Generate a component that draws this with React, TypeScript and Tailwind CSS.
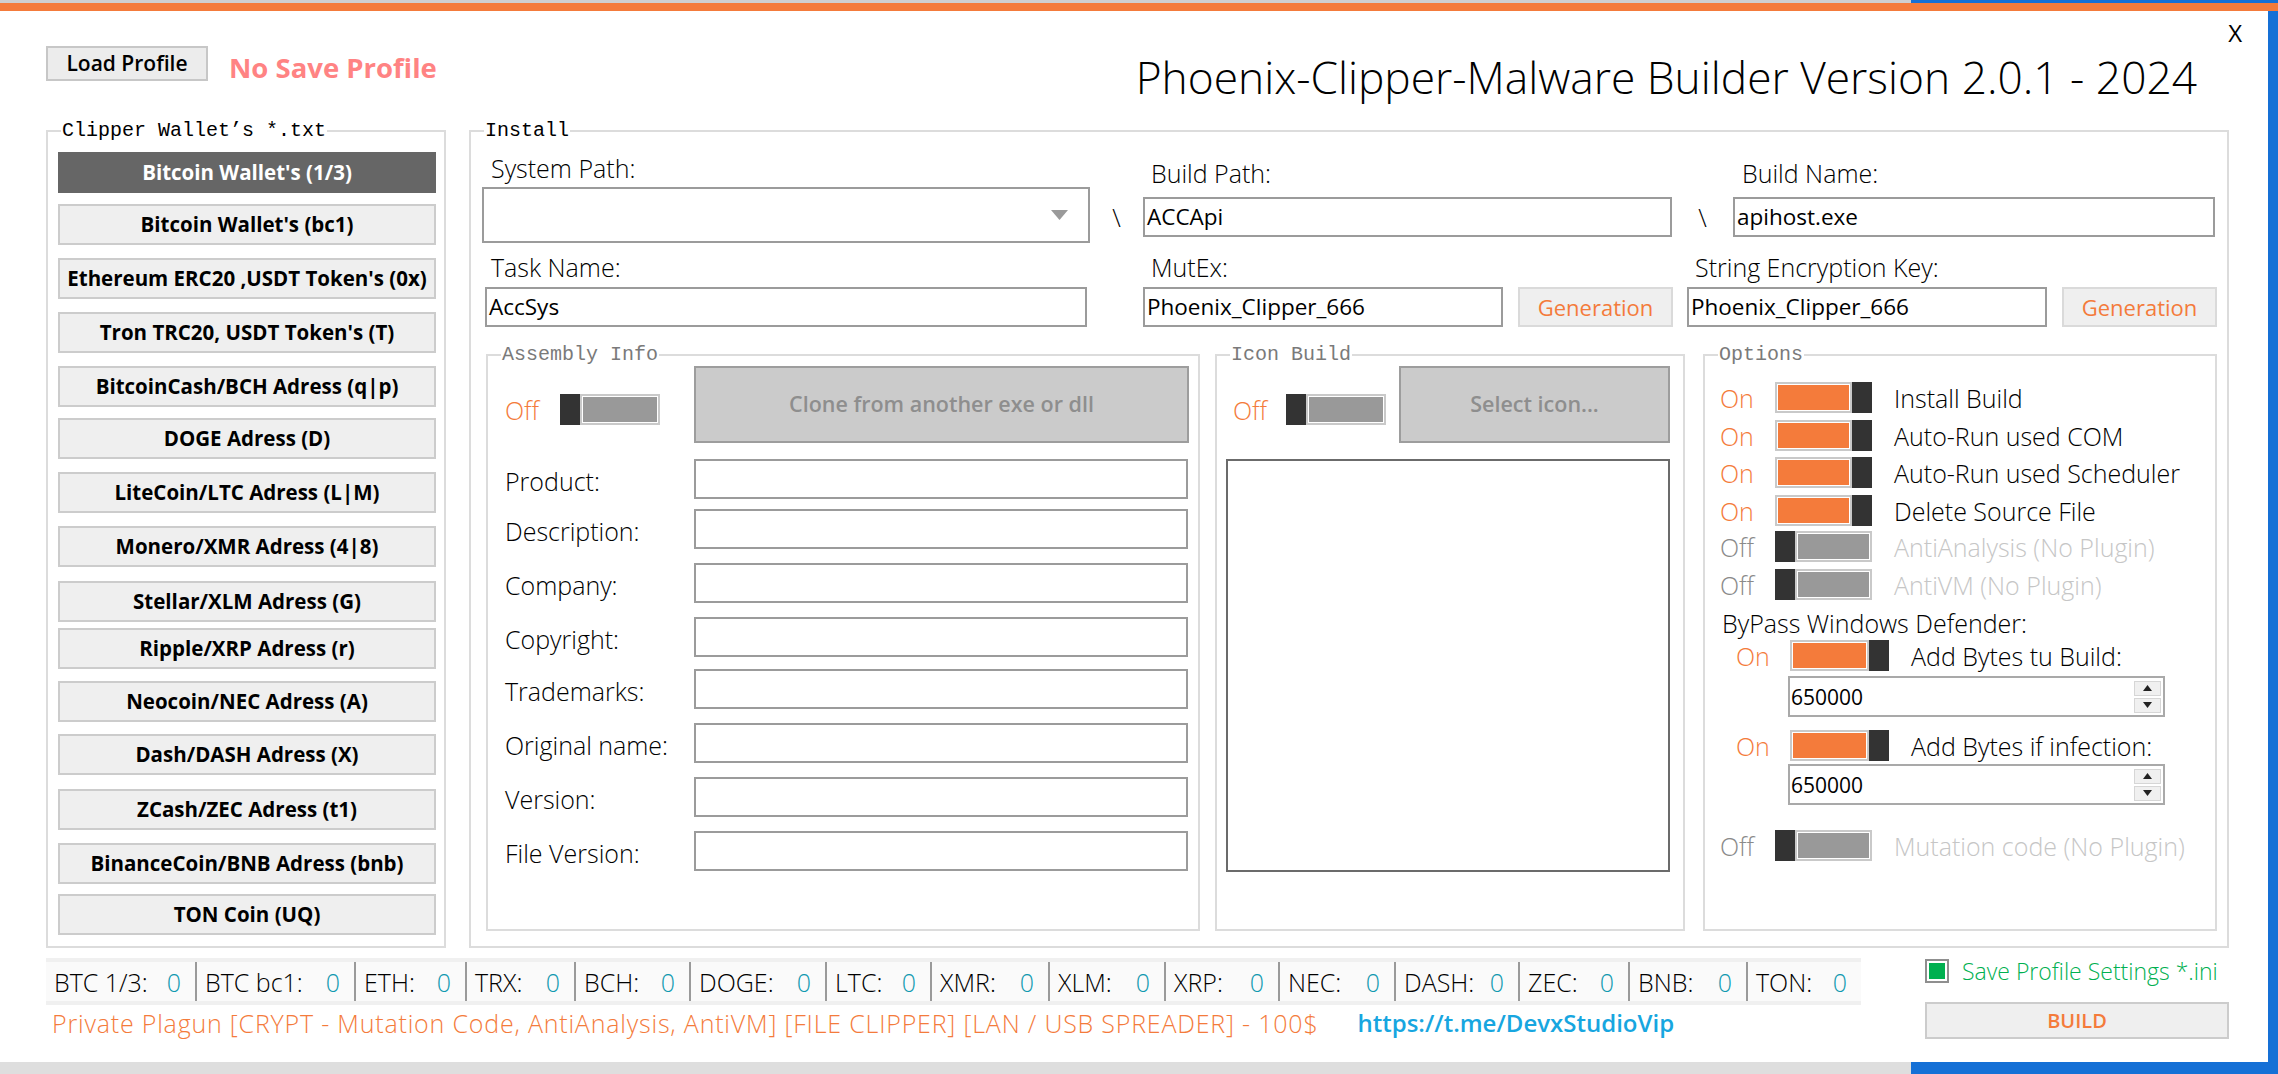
import React from 'react';

const wallets = [
  { name: "Bitcoin Wallet's (1/3)", mt: '', active: true },
  { name: "Bitcoin Wallet's (bc1)", mt: 'mt-[11px]' },
  { name: "Ethereum ERC20 ,USDT Token's (0x)", mt: 'mt-[13px]' },
  { name: "Tron TRC20, USDT Token's (T)", mt: 'mt-[13px]' },
  { name: 'BitcoinCash/BCH Adress (q|p)', mt: 'mt-[13px]' },
  { name: 'DOGE Adress (D)', mt: 'mt-[11px]' },
  { name: 'LiteCoin/LTC Adress (L|M)', mt: 'mt-[13px]' },
  { name: 'Monero/XMR Adress (4|8)', mt: 'mt-[13px]' },
  { name: 'Stellar/XLM Adress (G)', mt: 'mt-[14px]' },
  { name: 'Ripple/XRP Adress (r)', mt: 'mt-[6px]' },
  { name: 'Neocoin/NEC Adress (A)', mt: 'mt-[12px]' },
  { name: 'Dash/DASH Adress (X)', mt: 'mt-[12px]' },
  { name: 'ZCash/ZEC Adress (t1)', mt: 'mt-[14px]' },
  { name: 'BinanceCoin/BNB Adress (bnb)', mt: 'mt-[13px]' },
  { name: 'TON Coin (UQ)', mt: 'mt-[10px]' },
];

const assembly = [
  { label: 'Product:', mt: 'mt-[16px]' },
  { label: 'Description:', mt: 'mt-[10px]' },
  { label: 'Company:', mt: 'mt-[14px]' },
  { label: 'Copyright:', mt: 'mt-[14px]' },
  { label: 'Trademarks:', mt: 'mt-[12px]' },
  { label: 'Original name:', mt: 'mt-[14px]' },
  { label: 'Version:', mt: 'mt-[14px]' },
  { label: 'File Version:', mt: 'mt-[14px]' },
];

const options = [
  { on: true, label: 'Install Build', mt: 'mt-[17px]' },
  { on: true, label: 'Auto-Run used COM', mt: 'mt-[7px]' },
  { on: true, label: 'Auto-Run used Scheduler', mt: 'mt-[6px]' },
  { on: true, label: 'Delete Source File', mt: 'mt-[7px]' },
  { on: false, label: 'AntiAnalysis (No Plugin)', mt: 'mt-[5px]' },
  { on: false, label: 'AntiVM (No Plugin)', mt: 'mt-[7px]' },
];

const counters = [
  { label: 'BTC 1/3:', w: 'w-[149px]' },
  { label: 'BTC bc1:', w: 'w-[157px]' },
  { label: 'ETH:', w: 'w-[109px]' },
  { label: 'TRX:', w: 'w-[107px]' },
  { label: 'BCH:', w: 'w-[113px]' },
  { label: 'DOGE:', w: 'w-[134px]' },
  { label: 'LTC:', w: 'w-[103px]' },
  { label: 'XMR:', w: 'w-[116px]' },
  { label: 'XLM:', w: 'w-[114px]' },
  { label: 'XRP:', w: 'w-[112px]' },
  { label: 'NEC:', w: 'w-[114px]' },
  { label: 'DASH:', w: 'w-[122px]' },
  { label: 'ZEC:', w: 'w-[108px]' },
  { label: 'BNB:', w: 'w-[116px]' },
  { label: 'TON:', w: 'w-[113px]' },
];

function Toggle({ on, w }: { on: boolean; w: string }) {
  return (
    <div className={`flex h-[31px] shrink-0 ${w}`}>
      {!on && <div className="w-[20px] bg-[#333333]" />}
      <div className="flex-1 border-2 border-[#c9c9c9] bg-white p-[1px]">
        <div className={`h-full ${on ? 'bg-[#f47b3b]' : 'bg-[#999999]'}`} />
      </div>
      {on && <div className="w-[20px] bg-[#333333]" />}
    </div>
  );
}

function Legend({ text, muted }: { text: string; muted?: boolean }) {
  return (
    <legend
      className={`ml-[13px] px-[1px] font-['Liberation_Mono',monospace] text-[20px] leading-[20px] ${
        muted ? 'text-[#7a7a7a]' : 'text-black'
      }`}
    >
      {text}
    </legend>
  );
}

function TextBox({ value, w }: { value?: string; w: string }) {
  return (
    <div className={`h-[40px] ${w} shrink-0 border-2 border-[#9b9b9b] bg-white pl-[2px] text-[22.5px] font-normal leading-[36px] text-black`}>
      {value}
    </div>
  );
}

function GenButton() {
  return (
    <div className="flex h-[40px] w-[155px] items-center justify-center border-2 border-[#dadada] bg-[#efefef] text-[22px] font-normal text-[#f47b3b]">
      Generation
    </div>
  );
}

function Spinner() {
  return (
    <div className="ml-[68px] flex h-[41px] w-[377px] items-center border-2 border-[#a9a9a9] bg-white pl-[1px] pr-[2px]">
      <span className="flex-1 text-[21px] font-normal leading-[36px] text-black">650000</span>
      <div className="flex h-[32px] w-[27px] flex-col gap-[2px]">
        <div className="flex flex-1 items-center justify-center border border-[#d6d6d6] bg-[#f0f0f0]">
          <svg width="9" height="6" viewBox="0 0 9 6"><path d="M4.5 0L9 6H0z" fill="#222" /></svg>
        </div>
        <div className="flex flex-1 items-center justify-center border border-[#d6d6d6] bg-[#f0f0f0]">
          <svg width="9" height="6" viewBox="0 0 9 6"><path d="M0 0h9L4.5 6z" fill="#222" /></svg>
        </div>
      </div>
    </div>
  );
}

export default function App() {
  return (
    <div className="h-[1074px] w-[2278px] overflow-hidden font-['Open_Sans',sans-serif] font-light text-black">
      <div className="flex h-[3px]">
        <div className="w-[1911px] bg-[#cfcfcf]" />
        <div className="flex-1 bg-[#1570d6]" />
      </div>
      <div className="h-[8px] bg-[#f47b3b]" />

      <div className="flex h-[1051px]">
        <div className="flex w-[2268px] flex-col bg-white">
          {/* header */}
          <div className="flex h-[110px] justify-between">
            <div className="flex items-start pl-[46px] pt-[35px]">
              <div className="flex h-[35px] w-[162px] items-center justify-center border-2 border-[#c7c7c7] bg-[#ececec] text-[21px] font-semibold text-black">
                Load Profile
              </div>
              <div className="ml-[21px] mt-[4px] text-[27.5px] font-bold leading-[36px] text-[#ff8383]">No Save Profile</div>
            </div>
            <div className="flex flex-col items-end pr-[26px]">
              <div className="mt-[10px] text-[24px] font-normal leading-[24px]">X</div>
              <div className="mr-[45px] mt-[3px] whitespace-nowrap text-[44.3px] font-light leading-[58px]">
                Phoenix-Clipper-Malware Builder Version 2.0.1 - 2024
              </div>
            </div>
          </div>

          {/* groups */}
          <div className="flex h-[827px] items-start">
            <fieldset className="ml-[46px] h-[827px] w-[400px] min-w-0 border-2 border-[#dcdcdc]">
              <Legend text="Clipper Wallet’s *.txt" />
              <div className="flex flex-col px-[10px] pt-[11px]">
                {wallets.map((w) => (
                  <div
                    key={w.name}
                    className={`flex h-[41px] w-[378px] items-center justify-center whitespace-nowrap border-2 text-[20.5px] font-bold ${w.mt} ${
                      w.active ? 'border-[#666666] bg-[#666666] text-white' : 'border-[#cccccc] bg-[#efefef] text-black'
                    }`}
                  >
                    {w.name}
                  </div>
                ))}
              </div>
            </fieldset>

            <fieldset className="ml-[23px] h-[827px] w-[1760px] min-w-0 border-2 border-[#dcdcdc]">
              <Legend text="Install" />
              <div className="flex flex-col pl-[11px] pt-[11px] text-[25px]">
                {/* row A */}
                <div className="flex items-start">
                  <div className="w-[608px]">
                    <div className="ml-[9px] h-[32px] leading-[32px]">System Path:</div>
                    <div className="mt-[3px] flex h-[56px] items-center justify-end border-2 border-[#9b9b9b] bg-white pr-[20px]">
                      <svg width="17" height="10" viewBox="0 0 17 10"><path d="M0 0h17L8.5 10z" fill="#9a9a9a" /></svg>
                    </div>
                  </div>
                  <div className="mt-[49px] w-[53px] text-center leading-[32px]">\</div>
                  <div className="w-[529px]">
                    <div className="ml-[8px] mt-[5px] h-[32px] leading-[32px]">Build Path:</div>
                    <div className="mt-[8px]"><TextBox value="ACCApi" w="w-[529px]" /></div>
                  </div>
                  <div className="mt-[49px] w-[61px] text-center leading-[32px]">\</div>
                  <div className="w-[482px]">
                    <div className="ml-[9px] mt-[5px] h-[32px] leading-[32px]">Build Name:</div>
                    <div className="mt-[8px]"><TextBox value="apihost.exe" w="w-[482px]" /></div>
                  </div>
                </div>

                {/* row B */}
                <div className="mt-[8px] flex items-start">
                  <div className="ml-[3px] w-[602px]">
                    <div className="ml-[6px] h-[32px] leading-[32px]">Task Name:</div>
                    <div className="mt-[4px]"><TextBox value="AccSys" w="w-[602px]" /></div>
                  </div>
                  <div className="ml-[56px]">
                    <div className="ml-[8px] h-[32px] leading-[32px]">MutEx:</div>
                    <div className="mt-[4px] flex gap-[15px]">
                      <TextBox value="Phoenix_Clipper_666" w="w-[360px]" />
                      <GenButton />
                    </div>
                  </div>
                  <div className="ml-[14px]">
                    <div className="ml-[8px] h-[32px] leading-[32px]">String Encryption Key:</div>
                    <div className="mt-[4px] flex gap-[15px]">
                      <TextBox value="Phoenix_Clipper_666" w="w-[360px]" />
                      <GenButton />
                    </div>
                  </div>
                </div>

                {/* row C */}
                <div className="mt-[18px] flex items-start pl-[4px]">
                  <fieldset className="h-[586px] w-[714px] min-w-0 border-2 border-[#dcdcdc]">
                    <Legend text="Assembly Info" muted />
                    <div className="flex flex-col pl-[17px] pt-[1px]">
                      <div className="flex items-start">
                        <div className="mt-[28px] flex h-[31px] items-center">
                          <span className="w-[55px] leading-[32px] text-[#f47b3b]">Off</span>
                          <Toggle on={false} w="w-[100px]" />
                        </div>
                        <div className="ml-[34px] flex h-[77px] w-[495px] items-center justify-center border-2 border-[#9d9d9d] bg-[#cbcbcb] text-[21.5px] font-semibold text-[#8e8e8e]">
                          Clone from another exe or dll
                        </div>
                      </div>
                      {assembly.map((r) => (
                        <div key={r.label} className={`flex items-center ${r.mt}`}>
                          <span className="w-[189px] pt-[4px] leading-[32px]">{r.label}</span>
                          <TextBox w="w-[494px]" />
                        </div>
                      ))}
                    </div>
                  </fieldset>

                  <fieldset className="ml-[15px] h-[586px] w-[470px] min-w-0 border-2 border-[#dcdcdc]">
                    <Legend text="Icon Build" muted />
                    <div className="flex flex-col pt-[1px]">
                      <div className="flex items-start pl-[16px]">
                        <div className="mt-[28px] flex h-[31px] items-center">
                          <span className="w-[53px] leading-[32px] text-[#f47b3b]">Off</span>
                          <Toggle on={false} w="w-[100px]" />
                        </div>
                        <div className="ml-[13px] flex h-[77px] w-[271px] items-center justify-center border-2 border-[#9d9d9d] bg-[#cbcbcb] text-[21.5px] font-semibold text-[#8e8e8e]">
                          Select icon...
                        </div>
                      </div>
                      <div className="ml-[9px] mt-[16px] h-[413px] w-[444px] border-2 border-[#6b6b6b] bg-white" />
                    </div>
                  </fieldset>

                  <fieldset className="ml-[18px] h-[586px] w-[514px] min-w-0 border-2 border-[#dcdcdc]">
                    <Legend text="Options" muted />
                    <div className="flex flex-col pl-[15px]">
                      {options.map((o) => (
                        <div key={o.label} className={`flex h-[31px] items-center ${o.mt}`}>
                          <span className={`w-[55px] leading-[32px] ${o.on ? 'text-[#f47b3b]' : 'text-[#8a8a8a]'}`}>
                            {o.on ? 'On' : 'Off'}
                          </span>
                          <Toggle on={o.on} w="w-[97px]" />
                          <span className={`ml-[22px] whitespace-nowrap leading-[32px] ${o.on ? 'text-black' : 'text-[#c6c6c6]'}`}>
                            {o.label}
                          </span>
                        </div>
                      ))}
                      <div className="ml-[2px] mt-[7px] h-[32px] leading-[32px]">ByPass Windows Defender:</div>
                      <div className="mt-[1px] flex h-[31px] items-center pl-[16px]">
                        <span className="w-[54px] leading-[32px] text-[#f47b3b]">On</span>
                        <Toggle on w="w-[99px]" />
                        <span className="ml-[22px] leading-[32px]">Add Bytes tu Build:</span>
                      </div>
                      <div className="mt-[5px]"><Spinner /></div>
                      <div className="mt-[13px] flex h-[31px] items-center pl-[16px]">
                        <span className="w-[54px] leading-[32px] text-[#f47b3b]">On</span>
                        <Toggle on w="w-[99px]" />
                        <span className="ml-[22px] leading-[32px]">Add Bytes if infection:</span>
                      </div>
                      <div className="mt-[3px]"><Spinner /></div>
                      <div className="mt-[25px] flex h-[31px] items-center">
                        <span className="w-[55px] leading-[32px] text-[#8a8a8a]">Off</span>
                        <Toggle on={false} w="w-[97px]" />
                        <span className="ml-[22px] whitespace-nowrap leading-[32px] text-[#c6c6c6]">Mutation code (No Plugin)</span>
                      </div>
                    </div>
                  </fieldset>
                </div>
              </div>
            </fieldset>
          </div>

          {/* bottom */}
          <div className="mt-[10px] flex items-start">
            <div className="ml-[46px] flex flex-col">
              <div className="flex h-[47px] w-[1815px] bg-[#f0f0f0] py-[4px]">
                {counters.map((c, i) => (
                  <React.Fragment key={c.label}>
                    {i > 0 && <div className="w-[2px] bg-[#9a9a9a]" />}
                    <div className={`flex ${c.w} items-center justify-between bg-[#fafafa] pl-[8px] pr-[14px] text-[25px] leading-[32px]`}>
                      <span className="whitespace-nowrap">{c.label}</span>
                      <span className="text-[#1199b0]">0</span>
                    </div>
                  </React.Fragment>
                ))}
              </div>
              <div className="mt-[2px] flex h-[32px] items-center whitespace-nowrap pl-[6px]">
                <span className="text-[25px] leading-[32px] tracking-[0.8px] text-[#f47b3b]">
                  Private Plagun [CRYPT - Mutation Code, AntiAnalysis, AntiVM] [FILE CLIPPER] [LAN / USB SPREADER] - 100$
                </span>
                <span className="ml-[39px] text-[24px] font-semibold leading-[32px] text-[#17a6e0]">https://t.me/DevxStudioVip</span>
              </div>
            </div>
            <div className="ml-[64px] flex flex-col">
              <div className="mt-[1px] flex h-[24px] items-center">
                <div className="h-[24px] w-[24px] border-2 border-[#8f8f8f] bg-white p-[2px]">
                  <div className="h-full w-full bg-[#00b050]" />
                </div>
                <span className="ml-[13px] whitespace-nowrap text-[23px] leading-[32px] text-[#00b050]">Save Profile Settings *.ini</span>
              </div>
              <div className="mt-[19px] flex h-[37px] w-[304px] items-center justify-center border-2 border-[#cccccc] bg-[#efefef] text-[20px] font-semibold text-[#f47b3b]">
                BUILD
              </div>
            </div>
          </div>
        </div>
        <div className="flex-1 bg-[#1570d6]" />
      </div>

      <div className="flex h-[12px]">
        <div className="w-[1911px] bg-[#dedede]" />
        <div className="flex-1 bg-[#1570d6]" />
      </div>
    </div>
  );
}
